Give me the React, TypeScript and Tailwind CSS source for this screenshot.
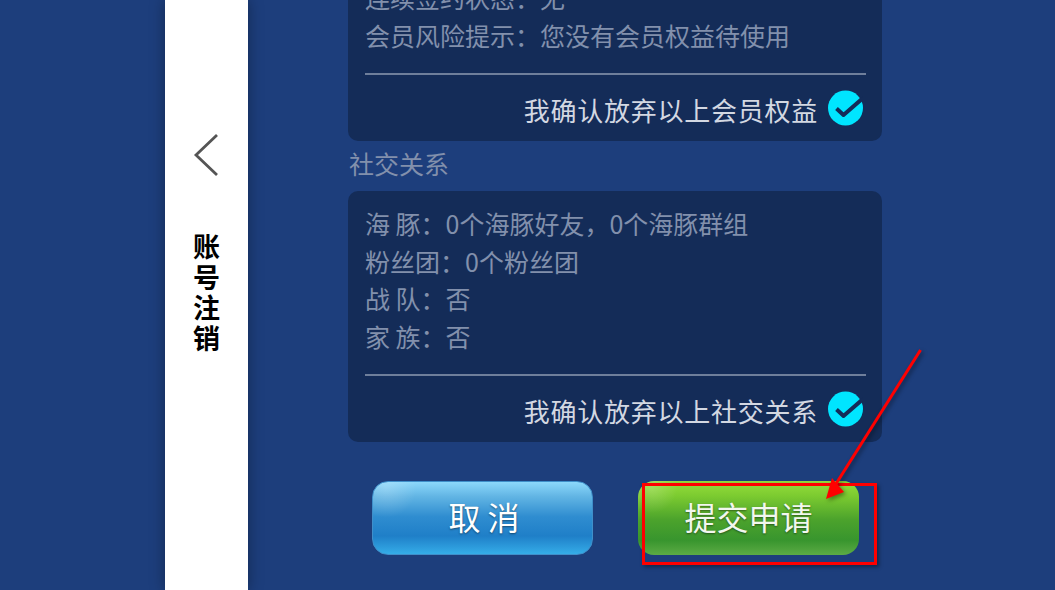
const F = { fontFamily: '"Noto Sans CJK SC", sans-serif' };
const COLON = "\uFF1A";
const COMMA = "\uFF0C";

function Check() {
  return (
    <svg width="35" height="36" viewBox="0 0 35 36" className="shrink-0 mb-[4px] mr-[3px]">
      <circle cx="17.5" cy="18" r="17.5" fill="#00e5ff" />
      <path d="M8.5 18.5 L15.5 25 L35 8" fill="none" stroke="#142c58" strokeWidth="4" strokeLinejoin="round" />
    </svg>
  );
}

function Confirm({ text }: { text: string }) {
  return (
    <div className="border-t-2 border-[#6f7f9b] mt-[19px] pt-[16px] flex items-center justify-end h-[37px] box-content pb-[13px]">
      <span className="text-[26px] leading-[36px] text-[#d3d8e2] mr-[10px] tracking-[0.75px]">{text}</span>
      <Check />
    </div>
  );
}

function Line({ children }: { children: React.ReactNode }) {
  return <div className="text-[25px] leading-[37.5px] text-[#8290ac] whitespace-pre">{children}</div>;
}

export default function App() {
  return (
    <div style={F} className="relative w-[1055px] h-[590px] overflow-hidden bg-[#1d3e7c] flex">
      <aside className="ml-[165px] w-[83px] h-full bg-white flex flex-col items-center shadow-[0_0_14px_rgba(0,0,0,0.35)] z-10 shrink-0">
        <svg width="28" height="44" viewBox="0 0 28 44" className="mt-[133px]">
          <path d="M24 2 L3 22 L24 42" fill="none" stroke="#555555" strokeWidth="2.8" />
        </svg>
        <div className="mt-[54px] w-[30px] text-center text-[27px] leading-[30.5px] font-bold text-black">账号注销</div>
      </aside>

      <main className="flex-1 flex flex-col justify-end pl-[100px] pb-[35px]">
        <section className="w-[534px] bg-[#142c58] rounded-b-[10px] pl-[17px] pr-[16px]">
          <Line>{`连续签约状态${COLON}无`}</Line>
          <Line>{`会员风险提示${COLON}您没有会员权益待使用`}</Line>
          <Confirm text="我确认放弃以上会员权益" />
        </section>
        <div className="text-[25px] leading-[45px] pb-[5px] text-[#8290ac] pl-[1px]">社交关系</div>
        <section className="w-[534px] bg-[#142c58] rounded-[10px] pl-[17px] pr-[16px] pt-[14px]">
          <Line>{`海 豚${COLON}0个海豚好友${COMMA}0个海豚群组`}</Line>
          <Line>{`粉丝团${COLON}0个粉丝团`}</Line>
          <Line>{`战 队${COLON}否`}</Line>
          <Line>{`家 族${COLON}否`}</Line>
          <Confirm text="我确认放弃以上社交关系" />
        </section>
        <div className="flex mt-[39px] pl-[24px] gap-[45px]">
          <button className="w-[221px] h-[74px] pb-[4px] pl-[3px] rounded-[16px] text-white text-[32px] bg-[radial-gradient(circle_at_6%_8%,rgba(255,255,255,0.2)_0,rgba(255,255,255,0)_14%),linear-gradient(180deg,#8cd8fb_0%,#62b5e4_20%,#2f8dd0_48%,#1f7fc8_75%,#35ade8_100%)] [text-shadow:0_1px_2px_rgba(0,0,0,0.45)] border border-[#3f8fca]">
            取 消
          </button>
          <button className="w-[221px] h-[74px] pb-[4px] rounded-[16px] text-[#f2f7ee] text-[32px] bg-[radial-gradient(circle_at_6%_8%,rgba(255,255,255,0.2)_0,rgba(255,255,255,0)_12%),linear-gradient(180deg,#96de3c_0%,#7ccb30_20%,#4ca32c_52%,#38952e_80%,#5cab45_100%)] [text-shadow:0_1px_2px_rgba(0,0,0,0.45)]">
            提交申请
          </button>
        </div>
      </main>

      <div className="absolute left-[642px] top-[483px] w-[235px] h-[82px] border-[3px] border-[#ff0000] shadow-[2px_2px_4px_rgba(0,0,0,0.4)] z-20" />
      <svg className="absolute left-0 top-0 z-20 [filter:drop-shadow(2px_2px_2px_rgba(0,0,0,0.4))]" width="1055" height="590" viewBox="0 0 1055 590">
        <path d="M920.5 350 L834 487" stroke="#ff0000" strokeWidth="3" fill="none" />
        <path d="M826 499 L832 478 L844 492 Z" fill="#ff0000" />
      </svg>
    </div>
  );
}
